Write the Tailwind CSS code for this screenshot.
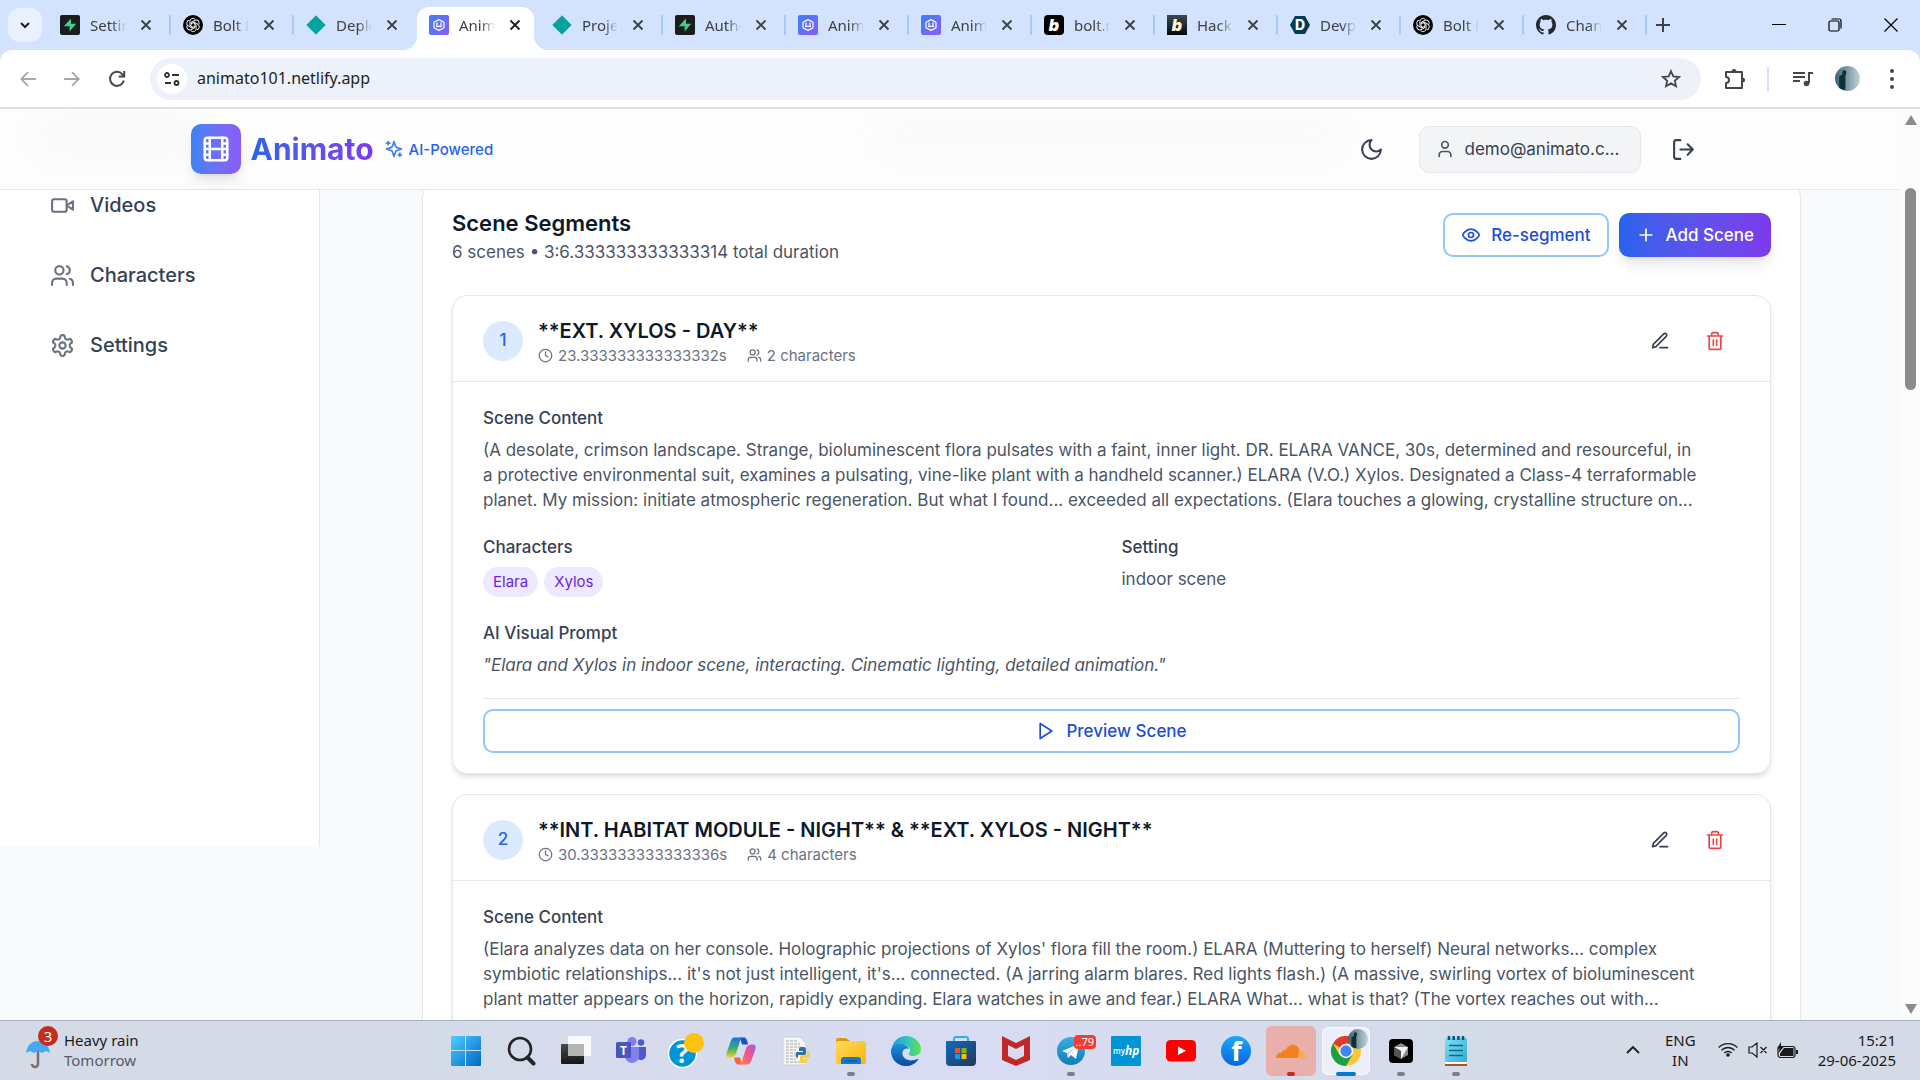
<!DOCTYPE html>
<html lang="en">
<head>
  <meta charset="UTF-8" />
  <meta name="viewport" content="width=device-width, initial-scale=1.0" />
  <title>Animato</title>
  <script src="https://cdn.jsdelivr.net/npm/@tailwindcss/browser@4"></script>
</head>
<body class="h-screen flex flex-col overflow-hidden bg-white font-['Inter',sans-serif] text-[17px] leading-[25px] text-gray-800">

  <!-- Shared icons -->
  <svg class="absolute size-0" aria-hidden="true">
    <defs>
      <linearGradient id="gBrand" x1="0" y1="0" x2="1" y2="1"><stop offset="0" stop-color="#3b82f6"/><stop offset="1" stop-color="#8b5cf6"/></linearGradient>
      <linearGradient id="gBolt" x1="0" y1="0" x2="0" y2="1"><stop offset="0" stop-color="#3a4a55"/><stop offset="1" stop-color="#05080c"/></linearGradient>
      <linearGradient id="gWin" x1="0" y1="0" x2="1" y2="1"><stop offset="0" stop-color="#4cd0fd"/><stop offset="1" stop-color="#0067c8"/></linearGradient>
      <linearGradient id="gDark" x1="0" y1="0" x2="0" y2="1"><stop offset="0" stop-color="#4a4a4a"/><stop offset="1" stop-color="#161616"/></linearGradient>
      <linearGradient id="gCopA" x1="0" y1="0" x2="0" y2="1"><stop offset="0" stop-color="#1a72dd"/><stop offset=".55" stop-color="#3ab06f"/><stop offset="1" stop-color="#f7d01c"/></linearGradient>
      <linearGradient id="gCopB" x1="0" y1="1" x2="1" y2="0"><stop offset="0" stop-color="#ff8a3c"/><stop offset=".5" stop-color="#f0588e"/><stop offset="1" stop-color="#a455e8"/></linearGradient>
      <linearGradient id="gFolder" x1="0" y1="0" x2="1" y2="1"><stop offset="0" stop-color="#ffd95c"/><stop offset="1" stop-color="#fbb50b"/></linearGradient>
      <linearGradient id="gEdgeA" x1="0" y1="0" x2="1" y2="0"><stop offset="0" stop-color="#1b9de2"/><stop offset=".5" stop-color="#2fc2c4"/><stop offset="1" stop-color="#62e34e"/></linearGradient>
      <linearGradient id="gEdgeB" x1="0" y1="0" x2="0" y2="1"><stop offset="0" stop-color="#1b8fd8"/><stop offset="1" stop-color="#0c4a9c"/></linearGradient>
      <linearGradient id="gStore" x1="0" y1="0" x2="1" y2="1"><stop offset="0" stop-color="#0f6cbd"/><stop offset="1" stop-color="#25365c"/></linearGradient>
      <linearGradient id="gTg" x1="0" y1="0" x2="0" y2="1"><stop offset="0" stop-color="#37aee2"/><stop offset="1" stop-color="#127cba"/></linearGradient>
      <linearGradient id="gFb" x1="0" y1="0" x2="0" y2="1"><stop offset="0" stop-color="#19a8fb"/><stop offset="1" stop-color="#0765e4"/></linearGradient>
      <linearGradient id="gNote" x1="0" y1="0" x2="1" y2="1"><stop offset="0" stop-color="#7fe0f4"/><stop offset="1" stop-color="#35abd4"/></linearGradient>
      <linearGradient id="gPhoto" x1="0" y1="0" x2="1" y2="0"><stop offset="0" stop-color="#3f6470"/><stop offset="1" stop-color="#c3d3da"/></linearGradient>
    </defs>

    <!-- app icons -->
    <symbol id="film" viewBox="0 0 24 24"><rect x="3" y="3" width="18" height="18" rx="2"/><path d="M7 3v18M3 7.5h4M3 12h18M3 16.5h4M17 3v18M17 7.5h4M17 16.5h4"/></symbol>
    <symbol id="sparkles" viewBox="0 0 24 24"><path d="m12 3-1.912 5.813a2 2 0 0 1-1.275 1.275L3 12l5.813 1.912a2 2 0 0 1 1.275 1.275L12 21l1.912-5.813a2 2 0 0 1 1.275-1.275L21 12l-5.813-1.912a2 2 0 0 1-1.275-1.275L12 3Z"/><path d="M5 3v4M19 17v4M3 5h4M17 19h4"/></symbol>
    <symbol id="moon" viewBox="0 0 24 24"><path d="M12 3a6 6 0 0 0 9 9 9 9 0 1 1-9-9Z"/></symbol>
    <symbol id="user" viewBox="0 0 24 24"><path d="M19 21v-2a4 4 0 0 0-4-4H9a4 4 0 0 0-4 4v2"/><circle cx="12" cy="7" r="4"/></symbol>
    <symbol id="logout" viewBox="0 0 24 24"><path d="M9 21H5a2 2 0 0 1-2-2V5a2 2 0 0 1 2-2h4M16 17l5-5-5-5M21 12H9"/></symbol>
    <symbol id="video" viewBox="0 0 24 24"><path d="m22 8-6 4 6 4V8Z"/><rect x="2" y="6" width="14" height="12" rx="2"/></symbol>
    <symbol id="users" viewBox="0 0 24 24"><path d="M16 21v-2a4 4 0 0 0-4-4H6a4 4 0 0 0-4 4v2M22 21v-2a4 4 0 0 0-3-3.87M16 3.13a4 4 0 0 1 0 7.75"/><circle cx="9" cy="7" r="4"/></symbol>
    <symbol id="settings" viewBox="0 0 24 24"><path d="M12.22 2h-.44a2 2 0 0 0-2 2v.18a2 2 0 0 1-1 1.73l-.43.25a2 2 0 0 1-2 0l-.15-.08a2 2 0 0 0-2.73.73l-.22.38a2 2 0 0 0 .73 2.73l.15.1a2 2 0 0 1 1 1.72v.51a2 2 0 0 1-1 1.74l-.15.09a2 2 0 0 0-.73 2.73l.22.38a2 2 0 0 0 2.73.73l.15-.08a2 2 0 0 1 2 0l.43.25a2 2 0 0 1 1 1.73V20a2 2 0 0 0 2 2h.44a2 2 0 0 0 2-2v-.18a2 2 0 0 1 1-1.73l.43-.25a2 2 0 0 1 2 0l.15.08a2 2 0 0 0 2.73-.73l.22-.39a2 2 0 0 0-.73-2.73l-.15-.08a2 2 0 0 1-1-1.74v-.5a2 2 0 0 1 1-1.74l.15-.09a2 2 0 0 0 .73-2.73l-.22-.38a2 2 0 0 0-2.73-.73l-.15.08a2 2 0 0 1-2 0l-.43-.25a2 2 0 0 1-1-1.73V4a2 2 0 0 0-2-2z"/><circle cx="12" cy="12" r="3"/></symbol>
    <symbol id="eye" viewBox="0 0 24 24"><path d="M2 12s3-7 10-7 10 7 10 7-3 7-10 7-10-7-10-7Z"/><circle cx="12" cy="12" r="3"/></symbol>
    <symbol id="plus" viewBox="0 0 24 24"><path d="M5 12h14M12 5v14"/></symbol>
    <symbol id="edit" viewBox="0 0 24 24"><path d="M12 20h9M16.5 3.5a2.12 2.12 0 0 1 3 3L7 19l-4 1 1-4Z"/></symbol>
    <symbol id="trash" viewBox="0 0 24 24"><path d="M3 6h18M19 6v14c0 1-1 2-2 2H7c-1 0-2-1-2-2V6M8 6V4c0-1 1-2 2-2h4c1 0 2 1 2 2v2M10 11v6M14 11v6"/></symbol>
    <symbol id="clock" viewBox="0 0 24 24"><circle cx="12" cy="12" r="10"/><path d="M12 6v6l4 2"/></symbol>
    <symbol id="play" viewBox="0 0 24 24"><path d="M5 3l14 9-14 9V3z"/></symbol>

    <!-- favicons -->
    <symbol id="fav-supabase" viewBox="0 0 20 20"><rect width="20" height="20" rx="2" fill="#1c1c1c"/><path d="M11 3.4v5.4h5.2L9.6 16.6v-5.4H3.8z" fill="#3ecf8e"/></symbol>
    <symbol id="fav-openai" viewBox="0 0 20 20"><circle cx="10" cy="10" r="10" fill="#000"/><g fill="none" stroke="#fff" stroke-width=".9"><path id="petal" d="M10 12.300L6.900 10.500V6.300a3 3 0 0 1 5.400-1.800"/><use href="#petal" transform="rotate(60 10 10)"/><use href="#petal" transform="rotate(120 10 10)"/><use href="#petal" transform="rotate(180 10 10)"/><use href="#petal" transform="rotate(240 10 10)"/><use href="#petal" transform="rotate(300 10 10)"/></g></symbol>
    <symbol id="fav-netlify" viewBox="0 0 20 20"><path d="M10 .8 19.2 10 10 19.2.8 10z" fill="#05a3a0" stroke="#05a3a0" stroke-linejoin="round"/></symbol>
    <symbol id="fav-animato" viewBox="0 0 20 20"><rect width="20" height="20" rx="2" fill="url(#gBrand)"/><path d="M10 4.600l5 2.700v5.400l-5 2.700-5-2.700V7.300z" fill="none" stroke="#fff" stroke-width="1.200" stroke-linejoin="round"/><path d="M8 7.600v3M12 7.600v3M7 11.400h6" stroke="#fff" stroke-width="1.300"/></symbol>
    <symbol id="fav-bolt" viewBox="0 0 20 20"><rect width="20" height="20" rx="4" fill="#000"/><text x="10" y="15.500" font-family="Inter, sans-serif" font-size="16" font-weight="900" font-style="italic" text-anchor="middle" fill="#fff">b</text></symbol>
    <symbol id="fav-hack" viewBox="0 0 20 20"><rect width="20" height="20" fill="url(#gBolt)"/><text x="10" y="15.500" font-family="Inter, sans-serif" font-size="16" font-weight="900" font-style="italic" text-anchor="middle" fill="#fdf6cf">b</text></symbol>
    <symbol id="fav-devpost" viewBox="0 0 20 20"><path d="M5 1h10l5 9-5 9H5L0 10z" fill="#003e54"/><text x="10" y="15" font-family="Inter, sans-serif" font-size="14" font-weight="800" text-anchor="middle" fill="#fff">D</text></symbol>
    <symbol id="fav-github" viewBox="0 0 16 16"><path fill="#24292f" d="M8 0C3.58 0 0 3.58 0 8c0 3.54 2.29 6.53 5.47 7.59.4.07.55-.17.55-.38 0-.19-.01-.82-.01-1.49-2.01.37-2.53-.49-2.69-.94-.09-.23-.48-.94-.82-1.13-.28-.15-.68-.52-.01-.53.63-.01 1.08.58 1.23.82.72 1.21 1.87.87 2.33.66.07-.52.28-.87.51-1.07-1.78-.2-3.64-.89-3.64-3.95 0-.87.31-1.59.82-2.15-.08-.2-.36-1.02.08-2.12 0 0 .67-.21 2.2.82.64-.18 1.32-.27 2-.27s1.36.09 2 .27c1.53-1.04 2.2-.82 2.2-.82.44 1.1.16 1.92.08 2.12.51.56.82 1.27.82 2.15 0 3.07-1.87 3.75-3.65 3.95.29.25.54.73.54 1.48 0 1.07-.01 1.93-.01 2.2 0 .21.15.46.55.38A8.01 8.01 0 0 0 16 8c0-4.42-3.58-8-8-8z"/></symbol>
    <symbol id="close" viewBox="0 0 12 12"><path d="M1.500 1.500l9 9M10.500 1.500l-9 9" fill="none" stroke="currentColor" stroke-width="1.800"/></symbol>
    <symbol id="photo" viewBox="0 0 24 24"><circle cx="12" cy="12" r="12" fill="url(#gPhoto)"/><path d="M4 21V10l3-2V6a2 2 0 0 1 4 0l-1 4v13a12 12 0 0 1-6-2z" fill="#10303a"/></symbol>
  </svg>

  <!-- Tab strip -->
  <div class="h-[50px] shrink-0 flex items-center bg-[#d3e3fd] font-['Noto_Sans',sans-serif] text-[15px] text-[#3c4043]">
    <button aria-label="Search tabs" class="ml-2 mr-[6px] size-[34px] shrink-0 rounded-xl bg-[#e9f1fe] flex items-center justify-center">
      <svg class="size-3" viewBox="0 0 12 12" fill="none" stroke="#1f1f1f" stroke-width="2"><path d="M2 4l4 4 4-4"/></svg>
    </button>
    <div id="tabs" class="h-full flex"></div>
    <button aria-label="New tab" class="ml-[9px]">
      <svg class="size-[14px]" viewBox="0 0 14 14" stroke="#3c4043" stroke-width="2"><path d="M7 0v14M0 7h14"/></svg>
    </button>
    <div class="ml-auto pr-[22px] flex items-center gap-[42px] text-black">
      <button aria-label="Minimize"><svg class="size-[14px]" viewBox="0 0 14 14" stroke="currentColor"><path d="M0 6.500h14"/></svg></button>
      <button aria-label="Restore"><svg class="size-[14px]" viewBox="0 0 14 14" fill="none" stroke="currentColor" stroke-width="1.200"><rect x="1" y="3" width="10" height="10" rx="1.500"/><path d="M3.500 1h7.500a2 2 0 0 1 2 2v7.500"/></svg></button>
      <button aria-label="Close window"><svg class="size-[14px]" viewBox="0 0 14 14" stroke="currentColor" stroke-width="1.200"><path d="M.5.5l13 13M13.500.5l-13 13"/></svg></button>
    </div>
  </div>

  <!-- Toolbar -->
  <div class="shrink-0 bg-[#d3e3fd]">
    <div class="h-[59px] flex items-center border-b-2 border-[#dfdfdf] rounded-t-xl bg-white pl-5 pr-[26px] text-[#474747]">
      <div class="flex gap-[28px] items-center">
        <button aria-label="Back" class="text-[#a8a8a8]"><svg class="size-4" viewBox="0 0 16 16" fill="none" stroke="currentColor" stroke-width="1.800"><path d="M16 8H1.500M8 1.200L1.200 8 8 14.800"/></svg></button>
        <button aria-label="Forward" class="text-[#a8a8a8]"><svg class="size-4" viewBox="0 0 16 16" fill="none" stroke="currentColor" stroke-width="1.800"><path d="M0 8h14.500M8 1.200L14.800 8 8 14.800"/></svg></button>
        <button aria-label="Reload"><svg class="size-[18px]" viewBox="0 0 18 18" fill="none" stroke="currentColor" stroke-width="2"><path d="M15.800 10.500A7 7 0 1 1 14.500 4.500L16 6.200M16.200 1v5.500h-5.500"/></svg></button>
      </div>
      <div class="ml-6 flex-1 h-[42px] flex items-center rounded-full bg-[#ecf1fa] pl-[7px] pr-5">
        <button aria-label="Site information" class="size-[30px] rounded-full bg-white flex items-center justify-center">
          <svg class="size-4" viewBox="0 0 16 16" fill="none" stroke="#303030" stroke-width="1.800"><circle cx="3" cy="4" r="2"/><path d="M8 4h7M1 12h6"/><circle cx="12.500" cy="12" r="2"/></svg>
        </button>
        <input type="text" aria-label="Address" value="animato101.netlify.app" class="ml-[10px] flex-1 bg-transparent outline-none font-['Noto_Sans',sans-serif] text-[16px] text-[#1f1f1f]" />
        <button aria-label="Bookmark"><svg class="size-5" viewBox="0 0 20 20" fill="none" stroke="currentColor" stroke-width="1.800"><path d="M10 2.200l2.300 5.200 5.700.6-4.200 3.800 1.200 5.500-5-2.900-5 2.900 1.200-5.500L2 8l5.700-.6z"/></svg></button>
      </div>
      <button aria-label="Extensions" class="ml-[22px]"><svg class="size-6" viewBox="0 0 24 24" fill="none" stroke="currentColor" stroke-width="2"><path d="M3 5h16v16H3v-5a3 3 0 0 0 0-6z" stroke-linejoin="round"/><path d="M8.500 4.500a2.500 2.500 0 0 1 5 0zM19.500 10.500a2.500 2.500 0 0 1 0 5z" fill="currentColor" stroke="none"/></svg></button>
      <div class="ml-5 h-6 w-[2px] bg-[#d3e3fd]"></div>
      <button aria-label="Media controls" class="ml-6"><svg class="size-5" viewBox="0 0 20 20" fill="none" stroke="currentColor" stroke-width="2"><path d="M0 4h12M0 8h12M0 12h7M16 14V4h4"/><circle cx="13.500" cy="14.500" r="2.800" fill="currentColor" stroke="none"/></svg></button>
      <button aria-label="Profile" class="ml-[22px]"><svg class="size-[25px]"><use href="#photo"/></svg></button>
      <button aria-label="Menu" class="ml-[30px]"><svg class="w-1 h-5" viewBox="0 0 4 20" fill="currentColor"><circle cx="2" cy="2" r="2"/><circle cx="2" cy="10" r="2"/><circle cx="2" cy="18" r="2"/></svg></button>
    </div>
  </div>

  <!-- Page -->
  <div class="flex-1 min-h-0 flex">
    <div class="flex-1 min-w-0 flex flex-col overflow-hidden bg-[#f8fafc]">

      <header class="relative z-10 shrink-0 h-[81px] border-b border-gray-200 bg-[#fdfdfd]">
        <div class="absolute left-10 top-3 w-[160px] h-7 rounded-full bg-gray-500/5 blur-lg"></div>
        <div class="absolute left-[880px] top-2 w-[460px] h-8 rounded-full bg-gray-500/3 blur-lg"></div>
        <div class="relative h-full max-w-[1600px] mx-auto px-10 flex items-center">
          <div class="size-[50px] rounded-[10px] bg-linear-to-r from-[#3b82f6] to-[#8b5cf6] flex items-center justify-center text-white shadow-lg">
            <svg class="size-[30px]" fill="none" stroke="currentColor" stroke-width="2" stroke-linecap="round"><use href="#film"/></svg>
          </div>
          <h1 class="ml-[10px] text-[30px] leading-[40px] font-bold bg-linear-to-r from-[#2563eb] to-[#7c3aed] bg-clip-text text-transparent">Animato</h1>
          <div class="ml-[10px] flex items-center gap-[5px] text-[15px] font-medium text-[#2563eb]">
            <svg class="size-5 text-[#3b82f6]" fill="none" stroke="currentColor" stroke-width="2" stroke-linecap="round" stroke-linejoin="round"><use href="#sparkles"/></svg>
            AI-Powered
          </div>
          <div class="ml-auto flex items-center text-gray-700">
            <button aria-label="Dark mode" class="p-[15px]"><svg class="size-[25px]" fill="none" stroke="currentColor" stroke-width="2" stroke-linecap="round" stroke-linejoin="round"><use href="#moon"/></svg></button>
            <button class="ml-5 w-[222px] h-[47px] px-[15px] flex items-center gap-[10px] rounded-[10px] border border-gray-200 bg-gray-100">
              <svg class="size-5 shrink-0 text-gray-600" fill="none" stroke="currentColor" stroke-width="2" stroke-linecap="round"><use href="#user"/></svg>
              <span class="truncate">demo@animato.c...</span>
            </button>
            <button aria-label="Log out" class="ml-[15px] p-[15px]"><svg class="size-[25px]" fill="none" stroke="currentColor" stroke-width="2" stroke-linecap="round" stroke-linejoin="round"><use href="#logout"/></svg></button>
          </div>
        </div>
      </header>

      <div class="flex-1 min-h-0 flex items-start">
        <nav class="w-80 h-[657px] shrink-0 bg-white border-r border-gray-200 px-[50px] text-[20px] font-medium text-gray-700">
          <a href="#" class="flex items-center gap-[15px] h-[30px] mb-10"><svg class="size-[25px] text-gray-500" fill="none" stroke="currentColor" stroke-width="2" stroke-linecap="round" stroke-linejoin="round"><use href="#video"/></svg>Videos</a>
          <a href="#" class="flex items-center gap-[15px] h-[30px] mb-10"><svg class="size-[25px] text-gray-500" fill="none" stroke="currentColor" stroke-width="2" stroke-linecap="round" stroke-linejoin="round"><use href="#users"/></svg>Characters</a>
          <a href="#" class="flex items-center gap-[15px] h-[30px] mb-10"><svg class="size-[25px] text-gray-500" fill="none" stroke="currentColor" stroke-width="2" stroke-linecap="round" stroke-linejoin="round"><use href="#settings"/></svg>Settings</a>
        </nav>

        <main class="flex-1 min-w-0 pl-[102px] pr-[100px]">
          <section class="-mt-2 rounded-[15px] border border-gray-200 bg-white px-[29px] pt-[25px] shadow-xs">
            <div class="flex items-start justify-between">
              <div>
                <h2 class="text-[22px] leading-[30px] font-semibold text-gray-900">Scene Segments</h2>
                <p class="mt-[2px] text-gray-600">6 scenes • 3:6.333333333333314 total duration</p>
              </div>
              <div class="pt-[5px] flex gap-[10px] font-medium">
                <button class="h-[44px] px-4 flex items-center gap-[10px] rounded-[10px] border-2 border-[#93c5fd] bg-white text-[#1d4ed8]"><svg class="size-5" fill="none" stroke="currentColor" stroke-width="2" stroke-linecap="round" stroke-linejoin="round"><use href="#eye"/></svg>Re-segment</button>
                <button class="h-[44px] px-[17px] flex items-center gap-[10px] rounded-[10px] bg-linear-to-r from-[#2563eb] to-[#7c3aed] text-white shadow-lg"><svg class="size-5" fill="none" stroke="currentColor" stroke-width="2" stroke-linecap="round"><use href="#plus"/></svg>Add Scene</button>
              </div>
            </div>

            <article class="mt-[30px] rounded-[15px] border border-gray-200 bg-white shadow-md">
              <div class="h-[86px] px-[30px] pt-1 flex items-center border-b border-gray-200">
                <div class="size-10 rounded-full bg-blue-100 flex items-center justify-center font-medium text-[#2563eb]">1</div>
                <div class="ml-[15px]">
                  <h3 class="text-[20px] leading-[30px] font-semibold text-gray-900">**EXT. XYLOS - DAY**</h3>
                  <div class="flex items-center gap-5 text-[15px] leading-5 text-gray-500">
                    <span class="flex items-center gap-[5px]"><svg class="size-[15px]" fill="none" stroke="currentColor" stroke-width="2" stroke-linecap="round"><use href="#clock"/></svg>23.333333333333332s</span>
                    <span class="flex items-center gap-[5px]"><svg class="size-[15px]" fill="none" stroke="currentColor" stroke-width="2" stroke-linecap="round"><use href="#users"/></svg>2 characters</span>
                  </div>
                </div>
                <div class="ml-auto flex gap-[5px]">
                  <button aria-label="Edit scene 1" class="px-[15px] py-3 text-gray-700"><svg class="size-5" fill="none" stroke="currentColor" stroke-width="2" stroke-linecap="round" stroke-linejoin="round"><use href="#edit"/></svg></button>
                  <button aria-label="Delete scene 1" class="px-[15px] py-3 text-[#ef4444]"><svg class="size-5" fill="none" stroke="currentColor" stroke-width="2" stroke-linecap="round" stroke-linejoin="round"><use href="#trash"/></svg></button>
                </div>
              </div>
              <div class="px-[30px] pt-6 pb-5">
                <h4 class="font-medium text-gray-700">Scene Content</h4>
                <p class="mt-[7px] whitespace-nowrap text-gray-600">(A desolate, crimson landscape. Strange, bioluminescent flora pulsates with a faint, inner light. DR. ELARA VANCE, 30s, determined and resourceful, in<br>a protective environmental suit, examines a pulsating, vine-like plant with a handheld scanner.) ELARA (V.O.) Xylos. Designated a Class-4 terraformable<br>planet. My mission: initiate atmospheric regeneration. But what I found... exceeded all expectations. (Elara touches a glowing, crystalline structure on...</p>
                <div class="mt-[22px] grid grid-cols-2 gap-5">
                  <div>
                    <h4 class="font-medium text-gray-700">Characters</h4>
                    <div class="mt-[7px] flex gap-[6px] text-[15px] leading-[30px] text-[#6d28d9]">
                      <span class="px-[10px] rounded-full bg-[#ede9fe]">Elara</span>
                      <span class="px-[10px] rounded-full bg-[#ede9fe]">Xylos</span>
                    </div>
                  </div>
                  <div>
                    <h4 class="font-medium text-gray-700">Setting</h4>
                    <p class="mt-[7px] text-gray-600">indoor scene</p>
                  </div>
                </div>
                <h4 class="mt-6 font-medium text-gray-700">AI Visual Prompt</h4>
                <p class="mt-[7px] italic text-gray-600">"Elara and Xylos in indoor scene, interacting. Cinematic lighting, detailed animation."</p>
                <div class="mt-5 border-t border-gray-200 pt-[10px]">
                  <button class="w-full h-[44px] flex items-center justify-center gap-[10px] rounded-[10px] border-2 border-[#93c5fd] font-medium text-[#1d4ed8]"><svg class="size-5" fill="none" stroke="currentColor" stroke-width="2" stroke-linejoin="round"><use href="#play"/></svg>Preview Scene</button>
                </div>
              </div>
            </article>

            <article class="mt-5 rounded-[15px] border border-gray-200 bg-white shadow-md">
              <div class="h-[86px] px-[30px] pt-1 flex items-center border-b border-gray-200">
                <div class="size-10 rounded-full bg-blue-100 flex items-center justify-center font-medium text-[#2563eb]">2</div>
                <div class="ml-[15px]">
                  <h3 class="text-[20px] leading-[30px] font-semibold text-gray-900">**INT. HABITAT MODULE - NIGHT** &amp; **EXT. XYLOS - NIGHT**</h3>
                  <div class="flex items-center gap-5 text-[15px] leading-5 text-gray-500">
                    <span class="flex items-center gap-[5px]"><svg class="size-[15px]" fill="none" stroke="currentColor" stroke-width="2" stroke-linecap="round"><use href="#clock"/></svg>30.333333333333336s</span>
                    <span class="flex items-center gap-[5px]"><svg class="size-[15px]" fill="none" stroke="currentColor" stroke-width="2" stroke-linecap="round"><use href="#users"/></svg>4 characters</span>
                  </div>
                </div>
                <div class="ml-auto flex gap-[5px]">
                  <button aria-label="Edit scene 2" class="px-[15px] py-3 text-gray-700"><svg class="size-5" fill="none" stroke="currentColor" stroke-width="2" stroke-linecap="round" stroke-linejoin="round"><use href="#edit"/></svg></button>
                  <button aria-label="Delete scene 2" class="px-[15px] py-3 text-[#ef4444]"><svg class="size-5" fill="none" stroke="currentColor" stroke-width="2" stroke-linecap="round" stroke-linejoin="round"><use href="#trash"/></svg></button>
                </div>
              </div>
              <div class="px-[30px] pt-6 pb-10">
                <h4 class="font-medium text-gray-700">Scene Content</h4>
                <p class="mt-[7px] whitespace-nowrap text-gray-600">(Elara analyzes data on her console. Holographic projections of Xylos' flora fill the room.) ELARA (Muttering to herself) Neural networks... complex<br>symbiotic relationships... it's not just intelligent, it's... connected. (A jarring alarm blares. Red lights flash.) (A massive, swirling vortex of bioluminescent<br>plant matter appears on the horizon, rapidly expanding. Elara watches in awe and fear.) ELARA What... what is that? (The vortex reaches out with...</p>
              </div>
            </article>
          </section>
        </main>
      </div>
    </div>

    <!-- scrollbar -->
    <div class="w-[19px] shrink-0 flex flex-col items-center bg-[#fcfcfc] py-[6px]">
      <svg class="w-3 h-[10px]" viewBox="0 0 12 10" fill="#8b8b8b"><path d="M6 0l6 10H0z"/></svg>
      <div class="mt-[63px] w-[11px] h-[202px] rounded-full bg-[#8b8b8b]"></div>
      <svg class="mt-auto w-3 h-[10px]" viewBox="0 0 12 10" fill="#8b8b8b"><path d="M6 10L0 0h12z"/></svg>
    </div>
  </div>

  <!-- Taskbar -->
  <footer class="h-[60px] shrink-0 flex border-t border-[#a9aebb] bg-linear-to-r from-[#d4dbe7] from-20% via-[#d8dcf3] via-50% to-[#d4dbe7] to-80% font-['Noto_Sans',sans-serif] text-[15px] leading-5 text-[#1a1a1a]">
    <div class="flex-1 pl-[26px] pb-[2px] flex items-center">
      <div class="relative w-[38px]">
        <svg class="w-6 h-8 mt-2" viewBox="0 0 24 32"><path d="M12 12v14a3 3 0 0 1-6 0" fill="none" stroke="#7b706c" stroke-width="2.500"/><path d="M0 15C1 7 6 3 12 3s11 4 12 12l-4-2-4 2-4-2-4 2-4-2z" fill="#48a9ef"/></svg>
        <span class="absolute left-3 -top-1 size-5 rounded-full bg-[#c42b1c] text-center text-white">3</span>
      </div>
      <div><div>Heavy rain</div><div class="text-[#555b66]">Tomorrow</div></div>
    </div>

    <div class="flex">
      <button aria-label="Start" class="w-[55px] flex items-center justify-center"><svg class="size-[30px]" viewBox="0 0 30 30" fill="url(#gWin)"><path d="M0 1a1 1 0 0 1 1-1h13v14H0zM15 0h14a1 1 0 0 1 1 1v13H15zM0 15h14v15H1a1 1 0 0 1-1-1zM15 15h15v14a1 1 0 0 1-1 1H15z"/></svg></button>
      <button aria-label="Search" class="w-[55px] flex items-center justify-center"><svg class="size-[30px]" viewBox="0 0 30 30" fill="none" stroke="#252525"><circle cx="14" cy="13" r="11" stroke-width="2.600"/><path d="M21.500 21.500l6 6" stroke-width="4" stroke-linecap="round"/></svg></button>
      <button aria-label="Task view" class="w-[55px] flex items-center justify-center"><svg class="size-[30px]" viewBox="0 0 30 30"><rect y="8" width="23" height="20" rx="1" fill="url(#gDark)"/><rect x="7" width="23" height="20" rx="1" fill="#fff" fill-opacity=".85"/><path d="M7 8h16v12H7z" fill="#b5b5b5"/></svg></button>
      <button aria-label="Teams" class="w-[55px] flex items-center justify-center"><svg class="size-[30px]" viewBox="0 0 30 30"><circle cx="25" cy="6.500" r="3.200" fill="#5059c9"/><path d="M20 11h10v8a5 5 0 0 1-8 4z" fill="#5059c9"/><circle cx="16" cy="5.500" r="4.500" fill="#7b83eb"/><path d="M9 11h14v9a7 7 0 0 1-14 0z" fill="#7b83eb"/><rect y="6" width="15" height="16" rx="1.500" fill="#4b53bc"/><text x="7.500" y="18.500" font-family="Open Sans, sans-serif" font-size="12" font-weight="700" text-anchor="middle" fill="#fff">T</text></svg></button>
      <button aria-label="Help" class="w-[55px] flex items-center justify-center"><svg class="w-9 h-[35px]" viewBox="0 0 36 35"><circle cx="14.500" cy="20.500" r="14" fill="#0095d6" stroke="#fff" stroke-width="1.500"/><text x="14.500" y="30" font-family="Open Sans, sans-serif" font-size="26" font-weight="700" text-anchor="middle" fill="#fff">?</text><circle cx="26" cy="10" r="10" fill="#ffc20e"/></svg></button>
      <button aria-label="Copilot" class="w-[55px] flex items-center justify-center"><svg class="size-[30px]" viewBox="0 0 30 30"><path d="M14 1.500h4c2 0 3 2 4 7h-6z" fill="#1d4fc0"/><path d="M16 28.500h-4c-2 0-3-2-4-7h6z" fill="#f5683d"/><path d="M8 1.500h9c-2 1-3 3-4 7l-3 9c-1 3-3 4-6 4H3c-3 0-3-3-2-6l4-11c1-2 2-3 3-3z" fill="url(#gCopA)"/><path d="M22 28.500h-9c2-1 3-3 4-7l3-9c1-3 3-4 6-4h1c3 0 3 3 2 6l-4 11c-1 2-2 3-3 3z" fill="url(#gCopB)"/></svg></button>
      <button aria-label="Python file" class="w-[55px] flex items-center justify-center"><svg class="size-[30px]" viewBox="0 0 30 30"><path d="M2 1h17l6 6v22H2z" fill="#f5f5f5" stroke="#d0d0d0"/><path d="M5 5h12M5 8h14M5 11h16M5 14h10M5 17h9M5 20h9M5 23h10M5 26h16" stroke="#c2c2c2" stroke-width="1.300" stroke-dasharray="3 1"/><path d="M21 11c-3 0-3 1-3 4h4v1h-6c-2 0-2 6 1 6v-3h6c2 0 2-1 2-4 0-4-1-4-4-4z" fill="#356f9f"/><path d="M23 27c3 0 3-1 3-4h-4v-1h5c3-1 3-7 0-7h-1v4h-5c-2 0-2 1-2 4 0 4 1 4 4 4z" fill="#ffcd3c"/></svg></button>
      <button aria-label="File Explorer" class="relative w-[55px] flex items-center justify-center"><svg class="size-[30px]" viewBox="0 0 30 30"><path d="M0 4a2 2 0 0 1 2-2h8l4 3h14v8H0z" fill="#d99a0c"/><rect y="5" width="30" height="23" rx="2" fill="url(#gFolder)"/><path d="M5 28v-4a3 3 0 0 1 3-3h14a3 3 0 0 1 3 3v4z" fill="#1479cf"/><path d="M9 25h12" stroke="#0b4f9c"/></svg><span class="absolute bottom-1 w-2 h-1 rounded-full bg-[#7c7f88]"></span></button>
      <button aria-label="Edge" class="w-[55px] flex items-center justify-center"><svg class="size-[30px]" viewBox="0 0 30 30"><path d="M1 12C2 5 8 0 15 0c9 0 15 7 15 13 0 5-4 7-8 7-3 0-5-1-4-3 3-3 0-8-6-8-5 0-9 1-11 3z" fill="url(#gEdgeA)"/><path d="M0 15c0-4 4-7 9-7 4 0 8 2 9 5-4-2-8 2-6 7 2 4 8 6 14 3 1 0 2 0 1 1-3 4-7 6-12 6C6 30 0 23 0 15z" fill="url(#gEdgeB)"/></svg></button>
      <button aria-label="Microsoft Store" class="w-[55px] flex items-center justify-center"><svg class="size-[30px]" viewBox="0 0 30 30"><path d="M8 6V3a2 2 0 0 1 2-2h10a2 2 0 0 1 2 2v3" fill="none" stroke="#22b6ee" stroke-width="2"/><path d="M0 6a1 1 0 0 1 1-1h28a1 1 0 0 1 1 1v20a4 4 0 0 1-4 4H4a4 4 0 0 1-4-4z" fill="url(#gStore)"/><path d="M9 12h5v5H9z" fill="#f25022"/><path d="M15.500 12h5v5h-5z" fill="#7fba00"/><path d="M9 18h5v5H9z" fill="#00a4ef"/><path d="M15.500 18h5v5h-5z" fill="#ffb900"/></svg></button>
      <button aria-label="McAfee" class="w-[55px] flex items-center justify-center"><svg class="size-[30px]" viewBox="0 0 30 30"><path d="M1 0l14 7 14-7v24l-14 6-14-6zM7 9v11l8 4 8-4V9l-8 4z" fill="#c0292b" fill-rule="evenodd"/></svg></button>
      <button aria-label="Telegram" class="relative w-[55px] flex items-center justify-center"><svg class="size-[28px]" viewBox="0 0 28 28"><circle cx="14" cy="14" r="14" fill="url(#gTg)"/><path d="M5 14l17-7-3 15-5-4-3 3-1-5z" fill="#fff"/><path d="M10 16l9-7-7 8-1 4z" fill="#b8d8ec"/></svg><span class="absolute left-[30px] top-[14px] h-[14px] px-[2px] rounded-[4px] bg-[#f23c34] text-[11px] leading-[14px] text-white">..79</span><span class="absolute bottom-1 w-2 h-1 rounded-full bg-[#7c7f88]"></span></button>
      <button aria-label="myHP" class="w-[55px] flex items-center justify-center"><svg class="size-[30px]" viewBox="0 0 30 30"><rect width="30" height="30" rx="1" fill="#0096d6"/><text x="2" y="18" font-family="Open Sans, sans-serif" font-size="8" font-weight="600" fill="#fff">my</text><text x="14" y="19" font-family="Open Sans, sans-serif" font-size="12" font-weight="700" font-style="italic" fill="#fff">hp</text></svg></button>
      <button aria-label="YouTube" class="w-[55px] flex items-center justify-center"><svg class="size-[30px]" viewBox="0 0 30 30"><rect y="4" width="30" height="21.500" rx="4.500" fill="#f00"/><path d="M12 10.500l8 4.300-8 4.300z" fill="#fff"/></svg></button>
      <button aria-label="Facebook" class="w-[55px] flex items-center justify-center"><svg class="size-[30px]" viewBox="0 0 30 30"><circle cx="15" cy="15" r="15" fill="url(#gFb)"/><text x="15.500" y="25" font-family="Open Sans, sans-serif" font-size="27" font-weight="700" text-anchor="middle" fill="#fff">f</text></svg></button>
      <button aria-label="Cloudflare WARP" class="relative w-[55px] flex items-center justify-center"><span class="w-[50px] h-[50px] rounded-md bg-[#e9afab] flex items-center justify-center"><svg class="size-[30px]" viewBox="0 0 30 30"><path d="M0 22c0-4 3-6 6-5 0-2 2-4 4-3 1-4 5-6 8-5 4 1 6 4 5 7l-1 6z" fill="#f4811f"/><path d="M22 22l2-7c3 0 6 3 6 7z" fill="#faad3f"/></svg></span><span class="absolute bottom-1 w-2 h-1 rounded-full bg-[#c42b1c]"></span></button>
      <button aria-label="Chrome" class="relative w-[55px] flex items-center justify-center"><span class="size-12 rounded-md border border-white/60 bg-[#eceffa] flex items-center justify-center"><svg class="size-[30px]" viewBox="0 0 30 30"><circle cx="15" cy="15" r="15" fill="#fcc934"/><path d="M15 15L2 7.500A15 15 0 0 1 28 7.500H15z" fill="#e33b2e"/><path d="M2 7.500A15 15 0 0 0 15 30l6.500-11.200L15 15l-6.500 3.700z" fill="#1e9e49"/><circle cx="15" cy="15" r="7.200" fill="#fff"/><circle cx="15" cy="15" r="5.700" fill="#4285f4"/></svg></span><svg class="absolute left-[29px] top-2 size-5"><use href="#photo"/></svg><span class="absolute bottom-1 w-5 h-1 rounded-full bg-[#0078d4]"></span></button>
      <button aria-label="Cursor" class="relative w-[55px] flex items-center justify-center"><svg class="size-6" viewBox="0 0 24 24"><rect width="24" height="24" rx="4" fill="#000"/><path d="M12 4l7 4v8l-7 4-7-4V8z" fill="#888"/><path d="M5 8h14l-7 12v-8z" fill="#f2f2f2"/><path d="M5 8l7 4v8l-7-4z" fill="#555"/></svg><span class="absolute bottom-1 w-2 h-1 rounded-full bg-[#7c7f88]"></span></button>
      <button aria-label="Notepad" class="relative w-[55px] flex items-center justify-center"><svg class="w-[22px] h-[30px]" viewBox="0 0 22 30"><path d="M0 26h22v4H0z" fill="#a8541b"/><rect y="3" width="22" height="25" rx="1" fill="#fff"/><rect y="2" width="22" height="24" rx="1" fill="url(#gNote)"/><path d="M4 9.500h14M4 14.500h14M4 19.500h14" stroke="#0b6a86" stroke-width="1.500"/><path d="M4 0v4M8.700 0v4M13.400 0v4M18 0v4" stroke="#0b5a78" stroke-width="2.600"/></svg><span class="absolute bottom-1 w-2 h-1 rounded-full bg-[#7c7f88]"></span></button>
    </div>

    <div class="flex-1 pr-6 pb-[2px] flex items-center justify-end">
      <button aria-label="Hidden icons"><svg class="w-[14px] h-2" viewBox="0 0 14 8" fill="none" stroke="#1a1a1a" stroke-width="1.800"><path d="M1 7l6-6 6 6"/></svg></button>
      <div class="ml-[25px] text-center"><div>ENG</div><div>IN</div></div>
      <svg class="ml-[22px] w-5 h-[15px]" viewBox="0 0 20 15" fill="none" stroke="#1a1a1a" stroke-width="1.300"><path d="M.7 5.500a13 13 0 0 1 18.600 0M3.500 8.300a9 9 0 0 1 13 0M6.300 11a5.300 5.300 0 0 1 7.400 0"/><circle cx="10" cy="13" r="1.800" fill="#1a1a1a" stroke="none"/></svg>
      <svg class="ml-[10px] w-5 h-4" viewBox="0 0 20 16" fill="none" stroke="#1a1a1a" stroke-width="1.200"><path d="M1 5h3l5-4v14l-5-4H1zM12.500 5l6 6M18.500 5l-6 6"/></svg>
      <svg class="ml-[9px] w-[21px] h-4" viewBox="0 0 21 16"><rect x="1" y="4.500" width="17" height="11" rx="2.500" fill="none" stroke="#1a1a1a" stroke-width="1.200"/><path d="M7 6h9.500v8H3v-2.500zM19 8h2v4h-2z" fill="#1a1a1a"/><path d="M4 0L0 6.500h2.500L1.500 11 7 4.500H4z" fill="#1a1a1a"/></svg>
      <div class="ml-5 text-right"><div>15:21</div><div>29-06-2025</div></div>
    </div>
  </footer>

<script>
  const tabs = [
    ["supabase", "Settings"], ["openai", "Bolt Hack"], ["netlify", "Deploys"], ["animato", "Animato", true],
    ["netlify", "Projects"], ["supabase", "Authentication"], ["animato", "Animato"], ["animato", "Animato"],
    ["bolt", "bolt.new"], ["hack", "Hackathon"], ["devpost", "Devpost"], ["openai", "Bolt Hack"], ["github", "Changes"],
  ];

  // corners that flare out under the active tab
  const flare = `
    <span class="absolute -left-[14px] bottom-0 size-[14px] bg-[radial-gradient(circle_at_0_0,#d3e3fd_14px,#fff_14px)]"></span>
    <span class="absolute -right-[14px] bottom-0 size-[14px] bg-[radial-gradient(circle_at_100%_0,#d3e3fd_14px,#fff_14px)]"></span>`;

  document.getElementById("tabs").innerHTML = tabs.map(([icon, title, active], i) => {
    const next = tabs[i + 1];
    const line = !active && !(next && next[2]);
    return `
      <div class="w-[123px] h-full flex items-center relative">
        ${active ? `<div class="absolute left-0 right-[6px] top-[7px] bottom-0 rounded-t-xl bg-white">${flare}</div>` : ""}
        <svg class="ml-3 size-5 shrink-0 relative"><use href="#fav-${icon}"/></svg>
        <span class="ml-[10px] w-9 relative overflow-hidden whitespace-nowrap mask-r-from-60%">${title}</span>
        <button aria-label="Close tab" class="ml-[14px] relative ${active ? "text-[#1f1f1f]" : ""}"><svg class="size-3"><use href="#close"/></svg></button>
        ${line ? `<span class="absolute right-0 h-5 w-[2px] rounded bg-[#a8c7fa]"></span>` : ""}
      </div>`;
  }).join("");
</script>
</body>
</html>
